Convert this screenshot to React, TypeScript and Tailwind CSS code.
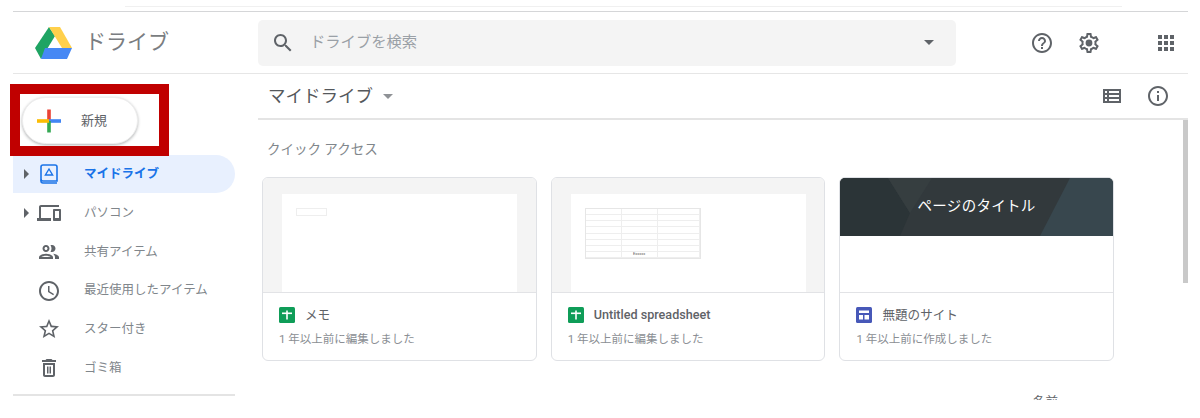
import React from "react";

const Icon = ({ d, size = 24, className = "" }: { d: string; size?: number; className?: string }) => (
  <svg width={size} height={size} viewBox="0 0 24 24" className={className} fill="currentColor">
    <path d={d} />
  </svg>
);

const paths = {
  search:
    "M15.5 14h-.79l-.28-.27C15.41 12.59 16 11.11 16 9.5 16 5.91 13.09 3 9.5 3S3 5.91 3 9.5 5.91 16 9.5 16c1.61 0 3.09-.59 4.23-1.57l.27.28v.79l5 4.99L20.49 19l-4.99-5zm-6 0C7.01 14 5 11.99 5 9.5S7.01 5 9.5 5 14 7.01 14 9.5 11.99 14 9.5 14z",
  help:
    "M11 18h2v-2h-2v2zm1-16C6.48 2 2 6.48 2 12s4.48 10 10 10 10-4.48 10-10S17.52 2 12 2zm0 18c-4.41 0-8-3.59-8-8s3.59-8 8-8 8 3.59 8 8-3.59 8-8 8zm0-14c-2.21 0-4 1.79-4 4h2c0-1.1.9-2 2-2s2 .9 2 2c0 2-3 1.75-3 5h2c0-2.25 3-2.5 3-5 0-2.21-1.79-4-4-4z",
  settings:
    "M19.43 12.98c.04-.32.07-.64.07-.98 0-.34-.03-.66-.07-.98l2.11-1.65c.19-.15.24-.42.12-.64l-2-3.46c-.09-.16-.26-.25-.44-.25-.06 0-.12.01-.17.03l-2.49 1c-.52-.4-1.08-.73-1.69-.98l-.38-2.65C14.46 2.18 14.25 2 14 2h-4c-.25 0-.46.18-.49.42l-.38 2.65c-.61.25-1.17.59-1.69.98l-2.49-1c-.06-.02-.12-.03-.18-.03-.17 0-.34.09-.43.25l-2 3.46c-.13.22-.07.49.12.64l2.11 1.65c-.04.32-.07.65-.07.98 0 .33.03.66.07.98l-2.11 1.65c-.19.15-.24.42-.12.64l2 3.46c.09.16.26.25.44.25.06 0 .12-.01.17-.03l2.49-1c.52.4 1.08.73 1.69.98l.38 2.65c.03.24.24.42.49.42h4c.25 0 .46-.18.49-.42l.38-2.65c.61-.25 1.17-.59 1.69-.98l2.49 1c.06.02.12.03.18.03.17 0 .34-.09.43-.25l2-3.46c.12-.22.07-.49-.12-.64l-2.11-1.65zm-1.98-1.71c.04.31.05.52.05.73 0 .21-.02.43-.05.73l-.14 1.13.89.7 1.08.84-.7 1.21-1.27-.51-1.04-.42-.9.68c-.43.32-.84.56-1.25.73l-1.06.43-.16 1.13-.2 1.35h-1.4l-.19-1.35-.16-1.13-1.06-.43c-.43-.18-.83-.41-1.23-.71l-.91-.7-1.06.43-1.27.51-.7-1.21 1.08-.84.89-.7-.14-1.13c-.03-.31-.05-.54-.05-.74s.02-.43.05-.73l.14-1.13-.89-.7-1.08-.84.7-1.21 1.27.51 1.04.42.9-.68c.43-.32.84-.56 1.25-.73l1.06-.43.16-1.13.2-1.35h1.39l.19 1.35.16 1.13 1.06.43c.43.18.83.41 1.23.71l.91.7 1.06-.43 1.27-.51.7 1.21-1.07.85-.89.7.14 1.13zM12 8.6a3.4 3.4 0 1 0 0 6.8 3.4 3.4 0 0 0 0-6.8z",
  apps:
    "M4 8h4V4H4v4zm6 12h4v-4h-4v4zm-6 0h4v-4H4v4zm0-6h4v-4H4v4zm6 0h4v-4h-4v4zm6-10v4h4V4h-4zm-6 4h4V4h-4v4zm6 6h4v-4h-4v4zm0 6h4v-4h-4v4z",
  info:
    "M11 7h2v2h-2zm0 4h2v6h-2zm1-9C6.48 2 2 6.48 2 12s4.48 10 10 10 10-4.48 10-10S17.52 2 12 2zm0 18c-4.41 0-8-3.59-8-8s3.59-8 8-8 8 3.59 8 8-3.59 8-8 8z",
  list:
    "M3 5h18v14H3V5zm2 2v2h2V7H5zm4 0v2h10V7H9zm-4 4v2h2v-2H5zm4 0v2h10v-2H9zm-4 4v2h2v-2H5zm4 0v2h10v-2H9z",
  devices:
    "M4 6h18V4H4c-1.1 0-2 .9-2 2v11H0v3h14v-3H4V6zm19 2h-6c-.55 0-1 .45-1 1v10c0 .55.45 1 1 1h6c.55 0 1-.45 1-1V9c0-.55-.45-1-1-1zm-1 9h-4v-7h4v7z",
  people:
    "M9 13.75c-2.34 0-7 1.17-7 3.5V19h14v-1.75c0-2.33-4.66-3.5-7-3.5zM4.34 17c.84-.58 2.87-1.25 4.66-1.25s3.82.67 4.66 1.25H4.34zM9 12c1.93 0 3.5-1.57 3.5-3.5S10.93 5 9 5 5.5 6.57 5.5 8.5 7.07 12 9 12zm0-5c.83 0 1.5.67 1.5 1.5S9.83 10 9 10s-1.5-.67-1.5-1.5S8.17 7 9 7zm7.04 6.81c1.16.84 1.96 1.96 1.96 3.44V19h4v-1.75c0-2.02-3.5-3.17-5.96-3.44zM15 12c1.93 0 3.5-1.57 3.5-3.5S16.93 5 15 5c-.54 0-1.04.13-1.5.35.63.89 1 1.98 1 3.15s-.37 2.26-1 3.15c.46.22.96.35 1.5.35z",
  clock:
    "M11.99 2C6.47 2 2 6.48 2 12s4.47 10 9.99 10C17.52 22 22 17.52 22 12S17.52 2 11.99 2zM12 20c-4.42 0-8-3.58-8-8s3.58-8 8-8 8 3.58 8 8-3.58 8-8 8zm.5-13H11v6l5.25 3.15.75-1.23-4.5-2.67z",
  star:
    "M22 9.24l-7.19-.62L12 2 9.19 8.63 2 9.24l5.46 4.73L5.82 21 12 17.27 18.18 21l-1.63-7.03L22 9.24zM12 15.4l-3.76 2.27 1-4.28-3.32-2.88 4.38-.38L12 6.1l1.71 4.04 4.38.38-3.32 2.88 1 4.28L12 15.4z",
  trash:
    "M6 19c0 1.1.9 2 2 2h8c1.1 0 2-.9 2-2V7H6v12zM8 9h8v10H8V9zm7.5-5l-1-1h-5l-1 1H5v2h14V4zM10 10.5h1.5v7H10zm2.5 0H14v7h-1.5z",
};

const DriveLogo = () => (
  <svg width="37" height="32" viewBox="0 0 37 32">
    <polygon points="14,0 20,9 6,32 0,21" fill="#1fa463" />
    <polygon points="14,0 25,0 37,21 27,21" fill="#ffd04b" />
    <polygon points="10,21 37,21 32,32 6,32" fill="#4688f4" />
  </svg>
);

const PlusLogo = () => (
  <svg width="24" height="24" viewBox="0 0 24 24">
    <rect x="10.2" y="0.5" width="3.6" height="11.5" fill="#ea4335" />
    <rect x="12" y="10.2" width="12" height="3.6" fill="#4285f4" />
    <rect x="10.2" y="12" width="3.6" height="11.5" fill="#34a853" />
    <rect x="0" y="10.2" width="12" height="3.6" fill="#fbbc05" />
  </svg>
);

const DriveFolderIcon = () => (
  <svg width="18" height="20" viewBox="0 0 18 20" fill="none">
    <path d="M3 1h12a2 2 0 0 1 2 2v14H3a2 2 0 0 1-2-2V3a2 2 0 0 1 2-2z" stroke="#1a73e8" strokeWidth="1.6" />
    <path d="M1 15.5V17a2 2 0 0 0 2 2h14" stroke="#1a73e8" strokeWidth="1.6" />
    <path d="M9 5l3.6 6H5.4L9 5z" stroke="#1a73e8" strokeWidth="1.4" />
  </svg>
);

const SheetIcon = () => (
  <svg width="16" height="16" viewBox="0 0 16 16">
    <rect width="16" height="16" rx="1.5" fill="#0f9d58" />
    <rect x="3" y="5.5" width="10" height="1.6" fill="#fff" />
    <rect x="7.2" y="3.5" width="1.6" height="9" fill="#fff" />
  </svg>
);

const SiteIcon = () => (
  <svg width="16" height="16" viewBox="0 0 16 16">
    <rect width="16" height="16" rx="1.5" fill="#4758b8" />
    <rect x="3" y="3.5" width="10" height="2.5" fill="#fff" />
    <rect x="3" y="8" width="4" height="4.5" fill="#fff" />
    <rect x="8.5" y="8" width="4.5" height="4.5" fill="#fff" />
  </svg>
);

const navItems = [
  { label: "パソコン", icon: paths.devices, arrow: true },
  { label: "共有アイテム", icon: paths.people },
  { label: "最近使用したアイテム", icon: paths.clock },
  { label: "スター付き", icon: paths.star },
  { label: "ゴミ箱", icon: paths.trash },
];

const Card = ({
  preview,
  icon,
  title,
  sub,
  bold,
}: {
  preview: React.ReactNode;
  icon: React.ReactNode;
  title: string;
  sub: string;
  bold?: boolean;
}) => (
  <div className="w-[274.5px] h-[184px] rounded-[6px] border border-[#dfe1e5] overflow-hidden flex flex-col bg-white">
    <div className="h-[115px] shrink-0 bg-[#f4f4f4] border-b border-[#e2e3e6] overflow-hidden">{preview}</div>
    <div className="flex-1 pl-[16px] pt-[13px]">
      <div className="flex items-center gap-[10px] h-[18px]">
        {icon}
        <span className={`text-[12.6px] text-[#5f6368] ${bold ? "font-medium" : ""}`}>{title}</span>
      </div>
      <div className="mt-[7px] text-[11.5px] leading-[16px] text-[#8a8e93]">{sub}</div>
    </div>
  </div>
);

const MemoPreview = () => (
  <div className="ml-[19px] mt-[16px] w-[235px] h-[100px] bg-white pl-[14px] pt-[14px]">
    <div className="w-[31px] h-[8px] border border-[#eeeeee]" />
  </div>
);

const SheetPreview = () => (
  <div className="ml-[19px] mt-[16px] w-[235px] h-[100px] bg-white pl-[14px] pt-[14px]">
    <div className="w-[116px] h-[51px] border border-[#e6e6e6] grid grid-cols-[36px_36px_1fr] grid-rows-8">
      {Array.from({ length: 24 }).map((_, i) => (
        <div key={i} className="border-b border-r border-[#eeeeee] flex items-center justify-center overflow-hidden">
          {i === 22 && <span className="text-[4px] leading-none text-[#555555]">Exxxxx</span>}
        </div>
      ))}
    </div>
  </div>
);

const SitePreview = () => (
  <div className="h-full bg-white">
    <div className="relative h-[58px] bg-[#32393c] flex items-center justify-center overflow-hidden">
      <svg className="absolute inset-0" width="275" height="58" viewBox="0 0 275 58">
        <polygon points="0,0 48,0 70,35 60,58 0,58" fill="#2b3437" />
        <polygon points="48,0 92,0 70,35" fill="#363e40" />
        <polygon points="230,0 275,0 275,58 200,58" fill="#38474e" />
      </svg>
      <span className="relative text-[14.5px] tracking-[0.3px] text-white">ページのタイトル</span>
    </div>
  </div>
);

export default function App() {
  return (
    <div className="relative w-[1200px] h-[418px] overflow-hidden bg-white font-['Roboto','Noto_Sans_CJK_JP',sans-serif]">
      <div className="h-[7px] ml-[125px] w-[997px] border-b border-[#f0f0f0]" />
      <div className="ml-[13px] w-[1175px] h-[389px] mt-[4px] border-t border-[#d5d6d8] overflow-hidden">
        {/* Header */}
        <header className="h-[62px] flex items-center border-b border-[#e6e6e6]">
          <div className="w-[245px] flex items-center pl-[22px] gap-[13px]">
            <DriveLogo />
            <span className="text-[21px] text-[#7a7d81]">ドライブ</span>
          </div>
          <div className="w-[698px] h-[46px] bg-[#f4f4f4] rounded-[5px] flex items-center pl-[13px] pr-[22px] text-[#5f6368]">
            <Icon d={paths.search} />
            <span className="ml-[15px] flex-1 text-[15.3px] text-[#9aa0a6]">ドライブを検索</span>
            <div className="w-0 h-0 border-x-[5px] border-x-transparent border-t-[5px] border-t-[#5f6368]" />
          </div>
          <div className="flex-1 flex items-center pl-[74px] text-[#5f6368]">
            <Icon d={paths.help} />
            <Icon d={paths.settings} className="ml-[23px]" />
            <Icon d={paths.apps} className="ml-[53px]" />
          </div>
        </header>

        <div className="flex">
          {/* Sidebar */}
          <aside className="w-[222px] shrink-0">
            <div className="ml-[9px] mt-[23px] w-[116px] h-[47px] rounded-full bg-white border border-[#efefef] shadow-[0_1px_3px_rgba(60,64,67,0.4)] flex items-center pl-[14px] gap-[20px]">
              <PlusLogo />
              <span className="text-[13px] text-[#5f6368]">新規</span>
            </div>
            <nav className="mt-[11px]">
              <div className="h-[38px] mb-[1px] rounded-r-full bg-[#e8f0fe] flex items-center">
                <div className="ml-[11px] w-0 h-0 border-y-[5px] border-y-transparent border-l-[5px] border-l-[#5f6368]" />
                <div className="ml-[8px] w-[24px] flex justify-center">
                  <DriveFolderIcon />
                </div>
                <span className="ml-[23px] text-[12.5px] font-bold text-[#1a73e8]">マイドライブ</span>
              </div>
              {navItems.map((item) => (
                <div key={item.label} className="h-[38.7px] flex items-center text-[#5f6368]">
                  <div className="ml-[11px] w-[5px]">
                    {item.arrow && (
                      <div className="w-0 h-0 border-y-[5px] border-y-transparent border-l-[5px] border-l-[#5f6368]" />
                    )}
                  </div>
                  <Icon d={item.icon} className="ml-[8px]" />
                  <span className="ml-[23px] text-[12.5px] text-[#80868b]">{item.label}</span>
                </div>
              ))}
            </nav>
            <div className="mt-[7px] border-t-2 border-[#e4e4e4]" />
          </aside>

          {/* Main */}
          <main className="flex-1 ml-[23px] min-w-0">
            <div className="h-[46px] flex items-center border-b-2 border-[#e4e4e4] pl-[10px] text-[#5f6368]">
              <span className="text-[17.5px] text-[#55585c]">マイドライブ</span>
              <div className="ml-[10px] w-0 h-0 border-x-[5px] border-x-transparent border-t-[5px] border-t-[#8f9296]" />
              <div className="ml-auto flex items-center pr-[18px]">
                <Icon d={paths.list} />
                <Icon d={paths.info} className="ml-[22px]" />
              </div>
            </div>
            <div className="flex">
              <div className="flex-1">
                <div className="mt-[19px] pl-[9px] text-[13.5px] leading-[20px] text-[#80868b]">クイック アクセス</div>
                <div className="mt-[18px] ml-[4px] flex gap-[14.2px]">
                  <Card preview={<MemoPreview />} icon={<SheetIcon />} title="メモ" sub="1 年以上前に編集しました" />
                  <Card
                    preview={<SheetPreview />}
                    icon={<SheetIcon />}
                    title="Untitled spreadsheet"
                    sub="1 年以上前に編集しました"
                    bold
                  />
                  <Card preview={<SitePreview />} icon={<SiteIcon />} title="無題のサイト" sub="1 年以上前に作成しました" />
                </div>
                <div className="mt-[32px] flex items-center justify-end pr-[95px] text-[12.5px] text-[#5f6368]">
                  <span>名前</span>
                  <div className="ml-[22px] w-0 h-0 border-x-[4px] border-x-transparent border-b-[4px] border-b-[#5f6368]" />
                </div>
              </div>
              <div className="w-[5px] h-[163px] bg-[#c9c9c9]" />
            </div>
          </main>
        </div>
      </div>

      {/* Red annotation box */}
      <div className="absolute left-[10px] top-[84px] w-[159px] h-[72px] border-[10px] border-[#c00000]" />
    </div>
  );
}
